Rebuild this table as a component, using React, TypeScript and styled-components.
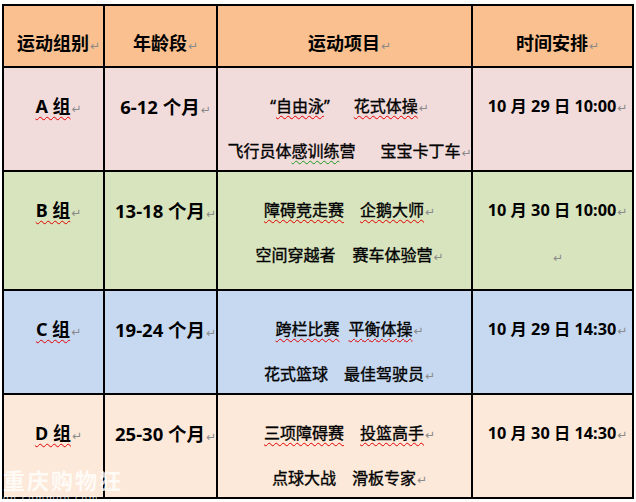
import React from "react";
import styled, { createGlobalStyle } from "styled-components";

const GlobalStyle = createGlobalStyle`
  html, body {
    margin: 0;
    padding: 0;
    background: #fff;
  }

  body {
    font-family: "Noto Sans", "Noto Sans CJK SC", sans-serif;
    color: #000;
  }
`;

const Page = styled.div`
  position: relative;
  width: 636px;
  height: 502px;
  overflow: hidden;
  background: #fff;
`;

const Table = styled.div`
  display: grid;
  grid-template-columns: 99px 111px 253px 159px;
  grid-template-rows: 60px 102px 117px 102px 102px;
  gap: 2px;
  padding: 2px;
  margin: 4px 0 0 2px;
  width: max-content;
  background: #000;
`;

const Cell = styled.div<{ $bg: string; $head?: boolean }>`
  display: flex;
  flex-direction: column;
  align-items: center;
  box-sizing: border-box;
  min-width: 0;
  padding-top: ${(p) => (p.$head ? 15 : 16)}px;
  background: ${(p) => p.$bg};
`;

const Line = styled.div<{ $size: number; $weight: number; $stroke?: boolean }>`
  height: 45px;
  line-height: 45px;
  text-align: center;
  white-space: nowrap;
  font-size: ${(p) => p.$size}px;
  font-weight: ${(p) => p.$weight};
  -webkit-text-stroke: ${(p) => (p.$stroke ? "0.35px #000" : "0")};
`;

const EmptyLine = styled.div`
  margin-top: 13px;
  height: 20px;
  line-height: 20px;
  text-align: center;
`;

const Item = styled.span<{ $ml: number }>`
  margin-left: ${(p) => p.$ml}px;
`;

const Wavy = styled.span<{ $c: "red" | "green" }>`
  text-decoration: underline wavy ${(p) => (p.$c === "red" ? "#e00000" : "#1a9a1a")};
  text-decoration-thickness: 1px;
  text-underline-offset: 3px;
`;

// Word paragraph mark, takes no room so the text stays centred
const Mark = styled.span`
  display: inline-block;
  width: 0;
  overflow: visible;
  margin-left: 1px;
  font-family: "DejaVu Sans", sans-serif;
  font-size: 12px;
  font-weight: 400;
  color: #8a8a8a;
  -webkit-text-stroke: 0;
  vertical-align: baseline;
`;

const Watermark = styled.div`
  position: absolute;
  left: 3px;
  top: 467px;
  color: rgba(255, 255, 255, 0.78);
`;

const WatermarkName = styled.div`
  font-family: "Noto Sans CJK SC", sans-serif;
  font-weight: 700;
  font-size: 22px;
  letter-spacing: 2px;
  line-height: 24px;
`;

const WatermarkUrl = styled.div`
  margin-top: 2px;
  font-family: "DejaVu Sans", sans-serif;
  font-size: 9px;
  letter-spacing: 1.6px;
  line-height: 10px;
`;

const HEAD_BG = "#FAC08F";

type ProjectLine = { gap: number; items: React.ReactNode[] };

const rows: {
  bg: string;
  group: React.ReactNode;
  age: string;
  time: string;
  lines: ProjectLine[];
  extraMark?: boolean;
}[] = [
  {
    bg: "#F2DCDB",
    group: <Wavy $c="red">A 组</Wavy>,
    age: "6-12 个月",
    time: "10 月 29 日 10:00",
    lines: [
      { gap: 24, items: [<>“<Wavy $c="red">自由泳</Wavy>”</>, <Wavy $c="red">花式体操</Wavy>] },
      { gap: 25, items: [<>飞行员体<Wavy $c="green">感训练</Wavy>营</>, "宝宝卡丁车"] },
    ],
  },
  {
    bg: "#D7E4BD",
    group: <Wavy $c="red">B 组</Wavy>,
    age: "13-18 个月",
    time: "10 月 30 日 10:00",
    extraMark: true,
    lines: [
      { gap: 16, items: [<Wavy $c="red">障碍竞走赛</Wavy>, <Wavy $c="red">企鹅大师</Wavy>] },
      { gap: 17, items: ["空间穿越者", "赛车体验营"] },
    ],
  },
  {
    bg: "#C6D9F1",
    group: <Wavy $c="red">C 组</Wavy>,
    age: "19-24 个月",
    time: "10 月 29 日 14:30",
    lines: [
      { gap: 9, items: [<Wavy $c="red">跨栏比赛</Wavy>, <Wavy $c="red">平衡体操</Wavy>] },
      { gap: 16, items: ["花式篮球", "最佳驾驶员"] },
    ],
  },
  {
    bg: "#FDE9D9",
    group: <Wavy $c="red">D 组</Wavy>,
    age: "25-30 个月",
    time: "10 月 30 日 14:30",
    lines: [
      { gap: 16, items: [<Wavy $c="red">三项障碍赛</Wavy>, <Wavy $c="red">投篮高手</Wavy>] },
      { gap: 16, items: ["点球大战", "滑板专家"] },
    ],
  },
];

const headers = ["运动组别", "年龄段", "运动项目", "时间安排"];

export default function App() {
  return (
    <Page>
      <GlobalStyle />
      <Table>
        {headers.map((h) => (
          <Cell key={h} $bg={HEAD_BG} $head>
            <Line $size={18} $weight={700}>
              {h}
              <Mark>↵</Mark>
            </Line>
          </Cell>
        ))}

        {rows.map((row, r) => (
          <React.Fragment key={r}>
            <Cell $bg={row.bg}>
              <Line $size={18} $weight={700}>
                {row.group}
                <Mark>↵</Mark>
              </Line>
            </Cell>
            <Cell $bg={row.bg}>
              <Line $size={18.5} $weight={700}>
                {row.age}
                <Mark>↵</Mark>
              </Line>
            </Cell>
            <Cell $bg={row.bg}>
              {row.lines.map((line, i) => (
                <Line key={i} $size={16} $weight={400} $stroke>
                  {line.items.map((it, j) => (
                    <Item key={j} $ml={j ? line.gap : 0}>
                      {it}
                    </Item>
                  ))}
                  <Mark>↵</Mark>
                </Line>
              ))}
            </Cell>
            <Cell $bg={row.bg}>
              <Line $size={16.3} $weight={700}>
                {row.time}
                <Mark>↵</Mark>
              </Line>
              {row.extraMark && (
                <EmptyLine>
                  <Mark>↵</Mark>
                </EmptyLine>
              )}
            </Cell>
          </React.Fragment>
        ))}
      </Table>

      <Watermark>
        <WatermarkName>重庆购物狂</WatermarkName>
        <WatermarkUrl>go.cqmmgo.com</WatermarkUrl>
      </Watermark>
    </Page>
  );
}
